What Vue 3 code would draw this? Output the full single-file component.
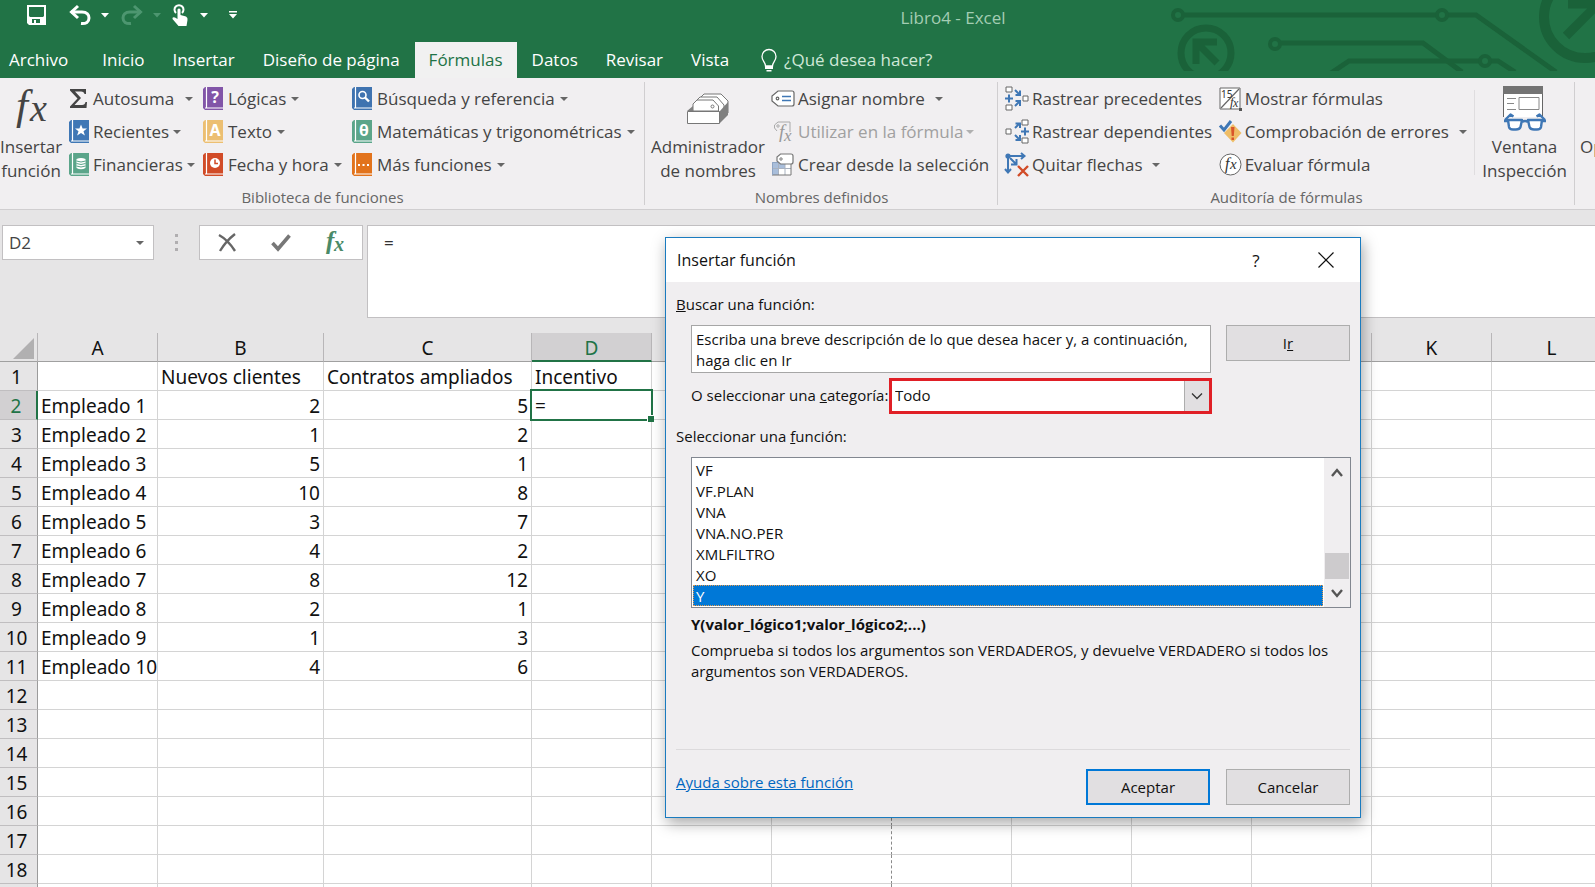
<script setup>
import { ref } from 'vue'

const tabs = ['Archivo', 'Inicio', 'Insertar', 'Diseño de página', 'Fórmulas', 'Datos', 'Revisar', 'Vista']

const library = [
  [
    { label: 'Autosuma', kind: 'sigma', wide: true },
    { label: 'Recientes', kind: 'star', color: '#3f77b5' },
    { label: 'Financieras', kind: 'coins', color: '#5ba58a' }
  ],
  [
    { label: 'Lógicas', kind: 'text', glyph: '?', color: '#8255a8' },
    { label: 'Texto', kind: 'text', glyph: 'A', color: '#ecbf72' },
    { label: 'Fecha y hora', kind: 'clock', color: '#d14b27' }
  ],
  [
    { label: 'Búsqueda y referencia', kind: 'lens', color: '#3f73b0' },
    { label: 'Matemáticas y trigonométricas', kind: 'text', glyph: 'θ', color: '#5ba58a' },
    { label: 'Más funciones', kind: 'dots', color: '#e2731c' }
  ]
]

const columns = 'ABCDEFGHIJKL'.split('')
const data = {
  1: ['', 'Nuevos clientes', 'Contratos ampliados', 'Incentivo'],
  2: ['Empleado 1', 2, 5, '='],
  3: ['Empleado 2', 1, 2],
  4: ['Empleado 3', 5, 1],
  5: ['Empleado 4', 10, 8],
  6: ['Empleado 5', 3, 7],
  7: ['Empleado 6', 4, 2],
  8: ['Empleado 7', 8, 12],
  9: ['Empleado 8', 2, 1],
  10: ['Empleado 9', 1, 3],
  11: ['Empleado 10', 4, 6]
}
const cell = (r, c) => data[r]?.[c] ?? ''

const cellName = ref('D2')
const formula = ref('=')
const query = ref('Escriba una breve descripción de lo que desea hacer y, a continuación, haga clic en Ir')
const category = ref('Todo')
const functions = ['VF', 'VF.PLAN', 'VNA', 'VNA.NO.PER', 'XMLFILTRO', 'XO', 'Y']
const selected = ref('Y')
</script>

<template>
  <div class="app">
    <header class="top">
      <svg class="circuit" viewBox="0 0 435 71" fill="none" stroke="#1a6239" stroke-width="5">
        <circle cx="18" cy="15" r="5" stroke-width="4" />
        <path d="M24 15H277M287 15H316L396 72" />
        <circle cx="282" cy="15" r="5" stroke-width="4" />
        <circle cx="46" cy="53" r="25" stroke-width="7" />
        <path d="M36 64V42H57M37 43L57 63" stroke-width="7" />
        <circle cx="115" cy="44" r="5" stroke-width="4" />
        <path d="M121 43H263L302 72" />
        <path d="M171 73L189 61H320M330 61H338L355 72" />
        <circle cx="325" cy="61" r="5" stroke-width="4" />
        <circle cx="425" cy="17" r="41" stroke-width="10" />
        <path d="M406 36L440 2M408 4H440" stroke-width="9" />
      </svg>
      <div class="titlebar">
        <div class="qat">
          <button class="q save" aria-label="Guardar">
            <svg width="19" height="20" viewBox="0 0 19 20"><path fill="#fff" fill-rule="evenodd" d="M0 0H19V20H2L0 18ZM2 2V11L3 12H16L17 11V2ZM5 14V18H7V15H9V18H13V14Z" /></svg>
          </button>
          <button class="q undo" aria-label="Deshacer">
            <svg width="22" height="20" viewBox="0 0 22 20" fill="none" stroke="#fff"><path stroke-width="3" d="M2 7H13C18 7 20 10 20 13C20 17 17 19 12 18.5" /><path stroke-width="3" d="M9 1L2.500 7L9 13" /></svg>
          </button>
          <button class="q" aria-label="Opciones de deshacer"><svg width="8" height="5" viewBox="0 0 8 5"><path fill="#fff" d="M0 0H8L4 4.500Z" /></svg></button>
          <button class="q redo" aria-label="Rehacer">
            <svg width="22" height="20" viewBox="0 0 22 20" fill="none" stroke="#4d9670"><path stroke-width="3" d="M20 7H9C4 7 2 10 2 13C2 17 5 19 10 18.500" /><path stroke-width="3" d="M13 1L19.500 7L13 13" /></svg>
          </button>
          <button class="q" aria-label="Opciones de rehacer"><svg width="8" height="5" viewBox="0 0 8 5"><path fill="#4d9670" d="M0 0H8L4 4.500Z" /></svg></button>
          <button class="q touch" aria-label="Modo mouse o táctil">
            <svg width="16" height="22" viewBox="0 0 16 22"><path fill="none" stroke="#fff" stroke-width="2" d="M4 9A4.500 4.500 0 1 1 10 9" /><path fill="#fff" d="M5.500 5.500Q7 3.500 8.500 5.500V11L14 12.500Q16 13.500 15.500 16L14.500 22H6.500L.5 15Q0 12.500 3 13.500L5.500 15Z" /></svg>
          </button>
          <button class="q" aria-label="Opciones de modo"><svg width="8" height="5" viewBox="0 0 8 5"><path fill="#fff" d="M0 0H8L4 4.500Z" /></svg></button>
          <button class="q custom" aria-label="Personalizar"><svg width="8" height="8" viewBox="0 0 8 8"><path fill="#fff" d="M0 0H8V1.500H0ZM0 3H8L4 7.500Z" /></svg></button>
        </div>
        <div class="title">Libro4 - Excel</div>
      </div>
      <nav class="tabs">
        <button v-for="t in tabs" :key="t" class="tab" :class="{ active: t === 'Fórmulas' }">{{ t }}</button>
        <button class="tell">
          <svg width="16" height="23" viewBox="0 0 16 23"><path fill="none" stroke="#fff" stroke-width="1.300" d="M4.500 17C4.500 13 1 12 1 7.500A7 7 0 0 1 15 7.500C15 12 11.500 13 11.500 17Z" /><path fill="#fff" d="M4 17H12V20H4ZM5.500 21H10.500V22.500H5.500Z" /></svg>
          ¿Qué desea hacer?
        </button>
      </nav>
    </header>

    <section class="ribbon">
      <div class="group g1">
        <div class="body">
          <button class="big">
            <span class="pic"><svg width="38" height="46" viewBox="0 0 38 46"><text x="4" y="33" class="fx" font-size="43" fill="#444">f</text><text x="18" y="35" class="fx" font-size="38" fill="#444">x</text></svg></span>
            Insertar<br />función
          </button>
          <div v-for="(col, i) in library" :key="i" class="col" :class="'lib' + i">
            <button v-for="b in col" :key="b.label" class="cmd">
              <svg v-if="b.kind === 'sigma'" class="ico" width="20" height="23" viewBox="0 0 20 23"><path fill="#444" d="M1 2H17V7H15.500Q15 4.500 12 4.500H6L12 11L5.500 18H13Q16 18 16.500 15H18L17.500 21H1V19.500L8.500 11.500L1 3.500Z" /></svg>
              <svg v-else class="ico" width="20" height="23" viewBox="0 0 20 23">
                <path :fill="b.color" d="M2 0H20V23H2L0 21V2Z" />
                <path fill="none" stroke="#fff" stroke-width="1.200" d="M3.500 0V21.500M2 21H20" />
                <text v-if="b.kind === 'text'" x="12" y="16" text-anchor="middle" class="bookglyph">{{ b.glyph }}</text>
                <path v-else-if="b.kind === 'star'" fill="#fff" d="M12 4.500L13.600 8.500H18L14.500 11.200L15.900 15.500L12 12.900L8.100 15.500L9.500 11.200L6 8.500H10.400Z" />
                <g v-else-if="b.kind === 'coins'"><path fill="#fff" d="M7.500 6Q12 4 16.500 6V15Q12 17.500 7.500 15Z" /><path fill="none" :stroke="b.color" stroke-width="1" d="M7.500 8Q12 10 16.500 8M7.500 10.500Q12 12.500 16.500 10.500M7.500 13Q12 15 16.500 13" /></g>
                <g v-else-if="b.kind === 'clock'"><circle cx="12" cy="10" r="5" fill="#fff" /><path fill="none" :stroke="b.color" stroke-width="1.500" d="M12 6.500V10.500H15" /></g>
                <g v-else-if="b.kind === 'lens'" fill="none" stroke="#fff"><circle cx="10.500" cy="8" r="3.500" stroke-width="1.600" /><path stroke-width="2.400" d="M13 10.500L17 14.500" /></g>
                <path v-else fill="#fff" d="M6 11h2v2H6zM10.500 11h2v2h-2zM15 11h2v2h-2z" />
              </svg>
              <span>{{ b.label }}</span>
              <i class="arrow" :class="{ wide: b.wide }"></i>
            </button>
          </div>
        </div>
        <div class="caption">Biblioteca de funciones</div>
      </div>

      <div class="group g2">
        <div class="body">
          <button class="big">
            <span class="pic"><svg width="42" height="31" viewBox="0 0 42 31" stroke="#777" fill="#fff"><path d="M14 4L17 1H34L41 8V20H30Z" /><path d="M10 7L13 4H30L37 12V19H28Z" /><path d="M6 18V11L10 7H26L31.500 13V18Z" /><path fill="#808080" stroke="none" d="M33 18L41 9V22L33 30ZM0 18L6 13V18Z" /><path d="M.5 18.500H32.500V30.500H.5Z" /><circle cx="25.500" cy="13.500" r="1.500" /></svg></span>
            Administrador<br />de nombres
          </button>
          <div class="col">
            <button class="cmd">
              <svg class="ico" width="24" height="17" viewBox="0 0 24 17" fill="#fff" stroke="#666" stroke-width="1.200"><path d="M7 1H21Q23 1 23 3V14Q23 16 21 16H7L1 11V6Z" /><circle cx="6.500" cy="8.500" r="1.300" /><path stroke="#3f77b5" stroke-width="1.600" d="M11 6.500H20M11 10.500H20" /></svg>
              <span>Asignar nombre</span><i class="arrow wide"></i>
            </button>
            <button class="cmd" disabled>
              <svg class="ico" width="24" height="22" viewBox="0 0 24 22"><path fill="none" stroke="#aaa" d="M6 10L3.500 7V4L7 1H19V11" /><circle cx="7" cy="5" r="1.200" fill="none" stroke="#aaa" /><text x="8" y="17" class="fx" font-size="19" fill="#999">f</text><text x="13" y="20" class="fx" font-size="17" fill="#999">x</text></svg>
              <span>Utilizar en la fórmula</span><i class="arrow"></i>
            </button>
            <button class="cmd">
              <svg class="ico" width="24" height="23" viewBox="0 0 24 23" stroke="#777" fill="#fff"><path stroke="none" d="M2 9H20V22H2Z" /><path fill="#a9bedb" stroke="none" d="M1 9H14V15.500H7.500V22H1Z" /><path fill="none" stroke="#a9b2c0" d="M1 15.500H20M7.500 9V22M14 9V22" /><path fill="none" d="M20 11V22H1" /><path fill="none" stroke="#8fa5c4" d="M1.500 22V9.500H8" /><path stroke-width="1.200" d="M9.500 1H20Q22 1 22 3V9Q22 11 20 11H9.500L6 8V4Z" /><circle cx="10" cy="6" r="1.200" /></svg>
              <span>Crear desde la selección</span>
            </button>
          </div>
        </div>
        <div class="caption">Nombres definidos</div>
      </div>

      <div class="group g3">
        <div class="body">
          <div class="col aud1">
            <button class="cmd">
              <svg class="ico" width="24" height="25" viewBox="0 0 24 25" fill="#fff" stroke="#666"><path d="M1 1H7V6H1ZM1 19H7V24H1ZM18 10H23V15H18Z" /><path fill="none" stroke="#3f77b5" stroke-width="2" d="M4 8.500V16.500M0 12.500H8M10 4L14 8M10 20L14 16M15 4.500V9H10.500M15 20V15H10.500" /></svg>
              <span>Rastrear precedentes</span>
            </button>
            <button class="cmd">
              <svg class="ico" width="24" height="25" viewBox="0 0 24 25" fill="#fff" stroke="#666"><path d="M17 1H23V6H17ZM17 19H23V24H17ZM1 10H6V15H1Z" /><path fill="none" stroke="#3f77b5" stroke-width="2" d="M20 8.500V16.500M16 12.500H24M10 9L14 5M10 16L14 20M10.500 4.500H15V9M10.500 21H15V16" /></svg>
              <span>Rastrear dependientes</span>
            </button>
            <button class="cmd">
              <svg class="ico" width="24" height="25" viewBox="0 0 24 25" fill="none" stroke="#3f77b5" stroke-width="2"><circle cx="3" cy="4" r="2.600" fill="#3f77b5" stroke="none" /><path d="M3 4H19M16 1L19.500 4L16 7M3 4V20M0 17L3 20.500L6 17M5 6L11 12M11.500 7V12.500H6" /><path stroke="#d14b27" stroke-width="2.400" d="M13 14L23 24M23 14L13 24" /></svg>
              <span>Quitar flechas</span><i class="arrow wide"></i>
            </button>
          </div>
          <div class="col aud2">
            <button class="cmd">
              <svg class="ico" width="23" height="24" viewBox="0 0 23 24"><path fill="#fff" stroke="#666" d="M1 1H21V22H1Z" /><path stroke="#666" stroke-width="1.200" d="M2 21L20 2" /><text x="2" y="11" class="small15">15</text><text x="11" y="19" class="fx" font-size="13" fill="#333">f</text><text x="14" y="20" class="fx" font-size="12" fill="#333">x</text><path fill="#555" d="M20 21H23V24H20Z" /></svg>
              <span>Mostrar fórmulas</span>
            </button>
            <button class="cmd">
              <svg class="ico" width="23" height="23" viewBox="0 0 23 23"><path fill="#efbd67" d="M14 4L22.500 13L14 22.500L5 13Z" /><path fill="none" stroke="#3f77b5" stroke-width="3" d="M1 5.500L5 10L12 1" /><path fill="#d9542b" d="M12 7H15.500L14.800 16H12.700ZM12.500 17.500H15V20H12.500Z" /></svg>
              <span>Comprobación de errores</span><i class="arrow wide"></i>
            </button>
            <button class="cmd">
              <svg class="ico" width="23" height="23" viewBox="0 0 23 23"><circle cx="11.500" cy="11.500" r="10.500" fill="#fff" stroke="#666" /><text x="6" y="16" class="fx" font-size="16" fill="#333">f</text><text x="11" y="16" class="fx" font-size="15" fill="#333">x</text></svg>
              <span>Evaluar fórmula</span>
            </button>
          </div>
          <button class="big watch">
            <span class="pic"><svg width="44" height="46" viewBox="0 0 44 46"><path fill="#fff" stroke="#666" d="M.5 31V1H39.500V31" /><path fill="#737373" d="M0 0H40V8H0Z" /><path fill="none" stroke="#888" d="M4 12.500H13M4 17.500H11M4 23.500H13M16 11.500H36V23.500H16Z" /><g fill="#fff" stroke="#3f77b5" stroke-width="2.400" stroke-linejoin="round"><path d="M5 34H19L17.500 41Q16.500 43.500 13 43.500H10Q6.500 43.500 6 41ZM25 34H39L38 41Q37.500 43.500 34 43.500H31Q27.500 43.500 26.500 41Z" /><path fill="none" d="M19 36Q22 34 25 36M1 35H6M38 35H43M2 34L7.500 28.500L10.500 30.500M42 34L36.500 28.500L33.500 30.500" /></g></svg></span>
            Ventana<br />Inspección
          </button>
        </div>
        <div class="caption">Auditoría de fórmulas</div>
      </div>

      <div class="group g4">
        <div class="body"><button class="big last"><span class="pic"></span>Opciones</button></div>
      </div>
    </section>

    <section class="formulabar">
      <div class="namebox">
        <input v-model="cellName" aria-label="Cuadro de nombres" />
        <i class="arrow"></i>
      </div>
      <div class="grip"><i></i><i></i><i></i></div>
      <div class="fbtns">
        <button aria-label="Cancelar entrada"><svg width="19" height="19" viewBox="0 0 19 19" fill="none" stroke="#666" stroke-width="2.400"><path d="M1 2Q10 7 17 18M17 1Q8 8 2 18" /></svg></button>
        <button aria-label="Introducir"><svg width="20" height="18" viewBox="0 0 20 18" fill="none" stroke="#777" stroke-width="3.600"><path d="M1.500 9L7 15L18.500 1.500" /></svg></button>
        <button aria-label="Insertar función"><svg width="22" height="26" viewBox="0 0 22 26"><text x="2" y="19" class="fx bold" font-size="25" fill="#4a8a68">f</text><text x="10" y="21" class="fx bold" font-size="20" fill="#4a8a68">x</text></svg></button>
      </div>
      <textarea v-model="formula" class="formula" aria-label="Barra de fórmulas"></textarea>
    </section>

    <main class="sheet">
      <table>
        <colgroup>
          <col class="w-head" /><col class="w-a" /><col class="w-b" /><col class="w-c" />
          <col v-for="n in 9" :key="n" class="w-n" />
        </colgroup>
        <thead>
          <tr>
            <th class="corner"><svg width="21" height="21" viewBox="0 0 21 21"><path fill="#b1b0b1" d="M21 0V21H0Z" /></svg></th>
            <th v-for="c in columns" :key="c" scope="col" :class="{ on: c === 'D' }">{{ c }}</th>
          </tr>
        </thead>
        <tbody>
          <tr v-for="r in 19" :key="r">
            <th scope="row" :class="{ on: r === 2 }">{{ r < 19 ? r : '' }}</th>
            <td v-for="(c, i) in columns" :key="c" :class="{ num: typeof cell(r, i) === 'number', current: r === 2 && c === 'D', brk: c === 'F' }">{{ cell(r, i) }}</td>
          </tr>
        </tbody>
      </table>
    </main>

    <div class="dialog" role="dialog" aria-labelledby="dlg-title">
      <div class="dhead">
        <h1 id="dlg-title">Insertar función</h1>
        <button class="help" aria-label="Ayuda">?</button>
        <button class="close" aria-label="Cerrar"><svg width="16" height="16" viewBox="0 0 16 16" fill="none" stroke="#111" stroke-width="1.200"><path d="M.5 .5L15.500 15.500M15.500 .5L.5 15.500" /></svg></button>
      </div>
      <div class="dbody">
        <label class="lbl" for="query"><u>B</u>uscar una función:</label>
        <div class="search">
          <textarea id="query" v-model="query"></textarea>
          <button class="btn">I<u>r</u></button>
        </div>
        <div class="cat">
          <label for="category">O seleccionar una <u>c</u>ategoría:</label>
          <div class="combo">
            <select id="category" v-model="category"><option>Todo</option></select>
            <span class="drop"><svg width="12" height="7" viewBox="0 0 12 7" fill="none" stroke="#333" stroke-width="1.300"><path d="M1 .5L6 5.500L11 .5" /></svg></span>
          </div>
        </div>
        <div id="fnlabel" class="lbl second">Seleccionar una <u>f</u>unción:</div>
        <div class="listbox">
          <ul role="listbox" aria-labelledby="fnlabel">
            <li v-for="f in functions" :key="f" role="option" :aria-selected="f === selected" :class="{ sel: f === selected }" @click="selected = f">{{ f }}</li>
          </ul>
          <div class="scroll">
            <button aria-label="Subir"><svg width="12" height="9" viewBox="0 0 12 9" fill="none" stroke="#555" stroke-width="2.400"><path d="M1 8L6 2L11 8" /></svg></button>
            <div class="thumb"></div>
            <button aria-label="Bajar"><svg width="12" height="9" viewBox="0 0 12 9" fill="none" stroke="#555" stroke-width="2.400"><path d="M1 1L6 7L11 1" /></svg></button>
          </div>
        </div>
        <div class="desc">
          <strong>Y(valor_lógico1;valor_lógico2;...)</strong>
          <p>Comprueba si todos los argumentos son VERDADEROS, y devuelve VERDADERO si todos los argumentos son VERDADEROS.</p>
        </div>
        <div class="foot">
          <a href="#">Ayuda sobre esta función</a>
          <button class="btn primary">Aceptar</button>
          <button class="btn">Cancelar</button>
        </div>
      </div>
    </div>
  </div>
</template>

<style>
html, body { margin: 0; overflow: hidden; }
</style>

<style scoped>
* { box-sizing: border-box; }
.app {
  position: relative;
  display: flex;
  flex-direction: column;
  height: 100vh;
  overflow: hidden;
  background: #e6e5e6;
  color: #444;
  font: 17px/24px "Open Sans", "Noto Sans", sans-serif;
}
button, input, textarea, select { font: inherit; color: inherit; }
button { border: 0; background: none; padding: 0; margin: 0; }
svg { display: block; flex: none; overflow: visible; }
.fx { font-family: "Liberation Serif", serif; font-style: italic; }
.bold { font-weight: 700; }

.top { position: relative; flex: none; background: #217346; color: #fff; overflow: hidden; }
.circuit { position: absolute; right: 0; top: 0; width: 435px; height: 71px; overflow: hidden; }
.titlebar { position: relative; display: flex; height: 42px; }
.qat { display: flex; align-items: center; height: 30px; padding-left: 27px; }
.q { display: flex; }
.undo { margin: 0 10px 0 23px; }
.redo { margin: 0 10px 0 12px; }
.touch { margin: 0 12px 0 11px; }
.custom { margin-left: 21px; }
.title { flex: 1; padding-left: 74px; text-align: center; line-height: 36px; color: #a3cdb3; }
.tabs { position: relative; display: flex; height: 36px; }
.tab { padding: 0 14px; line-height: 36px; }
.tab:first-child { padding: 0 20px 0 9px; }
.tab.active { margin: 0 1px; background: #f1f1f1; color: #217346; }
.tell { display: flex; align-items: center; gap: 7px; margin-left: 18px; color: #cfe8d8; }

.ribbon { display: flex; flex: none; background: #f1eff1; border-bottom: 1px solid #d0ced0; height: 132px; overflow: hidden; }
.group { position: relative; flex: none; padding-top: 4px; }
.group::after { content: ""; position: absolute; right: 0; top: 4px; bottom: 4px; width: 1px; background: #d0ced0; }
.g1 { width: 645px; }
.g2 { width: 353px; }
.g3 { width: 577px; }
.g4::after { display: none; }
.body { display: flex; }
.caption { margin-top: 3px; line-height: 22px; font-size: 15px; color: #666; text-align: center; }
.big { width: 62px; text-align: center; white-space: nowrap; }
.pic { display: flex; align-items: center; justify-content: center; height: 53px; }
.g2 .big { width: 126px; }
.big.watch { position: relative; width: 101px; }
.big.watch::before { content: ""; position: absolute; left: 0; top: 8px; bottom: 8px; width: 1px; background: #dfdddf; }
.big.last { width: 84px; padding: 0 0 24px 5px; text-align: left; }
.col { display: flex; flex-direction: column; }
.lib0 { width: 135px; padding-left: 7px; }
.lib1 { width: 149px; padding-left: 6px; }
.lib2 { padding-left: 6px; }
.cmd { display: flex; align-items: center; height: 33px; gap: 5px; white-space: nowrap; }
.lib0 .cmd { gap: 4px; }
.g2 .cmd, .g3 .cmd { gap: 3px; }
.aud1 { width: 215px; padding-left: 7px; }
.aud2 { width: 262px; padding-left: 6px; }
.cmd[disabled] { color: #a0a0a0; }
.arrow { width: 0; border: 4px solid transparent; border-top: 4px solid #666; border-bottom: 0; }
.arrow.wide { margin-left: 7px; }
.cmd[disabled] .arrow { border-top-color: #b0b0b0; }
.bookglyph { font: 700 16px "Noto Sans", sans-serif; fill: #fff; }
.small15 { font: 10px "Noto Sans", sans-serif; fill: #333; }

.formulabar { display: flex; flex: none; padding: 15px 0 0 2px; height: 123px; color: #333; }
.namebox { display: flex; align-items: center; width: 152px; height: 35px; background: #fff; border: 1px solid #c2c0c2; padding-right: 9px; }
.namebox input { flex: 1; min-width: 0; border: 0; padding: 0 0 0 6px; background: none; color: #444; }
.grip { display: flex; flex-direction: column; gap: 4px; width: 45px; height: 35px; align-items: center; justify-content: center; }
.grip i { width: 3px; height: 3px; background: #b0aeb0; }
.fbtns { display: flex; width: 164px; height: 35px; background: #fff; border: 1px solid #c2c0c2; }
.fbtns button { flex: 1; display: flex; align-items: center; justify-content: center; }
.formula { flex: 1; margin-left: 4px; height: 93px; background: #fff; border: 1px solid #c2c0c2; border-right: 0; padding: 5px 16px; resize: none; outline: 0; display: block; }

.sheet { flex: 1; min-height: 0; overflow: hidden; color: #111; font: 19px/26px "Noto Sans", "Open Sans", sans-serif; }
table { width: 1612px; table-layout: fixed; border-collapse: separate; border-spacing: 0; background: #fff; }
.w-head { width: 38px; }
.w-a { width: 120px; }
.w-b { width: 166px; }
.w-c { width: 208px; }
.w-n { width: 120px; }
th { height: 29px; padding: 2px 0 0; font-weight: 400; background: #e6e5e6; text-align: center; border-right: 1px solid #b8b6b8; border-bottom: 1px solid #a0a0a0; }
thead th { padding-top: 3px; line-height: 25px; }
thead th.on { background: #d2d0d2; color: #217346; border-bottom: 2px solid #217346; line-height: 24px; }
tbody th { border-bottom-color: #c0bec0; border-right-color: #9b9b9b; padding-right: 4px; }
tbody th.on { background: #d2d0d2; color: #217346; border-right: 2px solid #217346; }
thead th.corner { padding: 0; }
.corner svg { margin: 3px 3px 0 auto; }
td { height: 29px; padding: 2px 3px 0; border-right: 1px solid #d4d4d4; border-bottom: 1px solid #d4d4d4; white-space: nowrap; overflow: hidden; }
td.num { text-align: right; }
td.brk { border-right: 1px dashed #8a8a8a; }
td.current { position: relative; overflow: visible; }
td.current::before { content: ""; position: absolute; inset: -2px; border: 2px solid #217346; }
td.current::after { content: ""; position: absolute; right: -3px; bottom: -3px; width: 6px; height: 6px; background: #217346; border-top: 1px solid #fff; border-left: 1px solid #fff; }

.dialog { position: absolute; left: 665px; top: 237px; width: 696px; background: #f0eef0; border: 1px solid #1a7bbf; box-shadow: 2px 5px 14px rgba(0, 0, 0, 0.35); color: #111; font-size: 15px; line-height: 21px; }
.dhead { display: flex; align-items: center; height: 44px; background: #fff; padding-left: 11px; }
h1 { flex: 1; margin: 0; font-size: 16px; font-weight: 400; }
.help { width: 20px; font-size: 17px; }
.close { display: flex; justify-content: center; width: 40px; margin: 0 14px 0 40px; }
.dbody { padding: 12px 10px 12px; }
.lbl { display: block; }
.search { display: flex; align-items: flex-start; gap: 15px; margin: 10px 0 5px 15px; }
.search textarea { flex: 1; display: block; height: 48px; padding: 3px 4px; border: 1px solid #a6a6a6; background: #fff; resize: none; outline: 0; overflow: hidden; }
.btn { width: 124px; height: 36px; background: #e1dfe1; border: 1px solid #adadad; }
.btn.primary { border: 2px solid #0078d7; }
.cat { display: flex; align-items: center; justify-content: space-between; margin: 0 138px 0 15px; white-space: nowrap; }
.cat label { padding-bottom: 2px; }
.combo { display: flex; width: 323px; height: 36px; border: 3px solid #e01f26; background: #fff; position: relative; }
.combo select { appearance: none; flex: 1; border: 0; background: none; padding: 0 3px 2px; outline: 0; }
.drop { position: absolute; right: 0; top: 0; bottom: 0; width: 25px; display: flex; align-items: center; justify-content: center; background: #e1dfe1; border-left: 1px solid #adadad; pointer-events: none; }
.second { margin-top: 12px; }
.listbox { display: flex; margin: 10px -1px 0 15px; border: 1px solid #828790; background: #fff; height: 151px; }
ul { flex: 1; list-style: none; margin: 0; padding: 1px; }
li { padding: 2px 0 0 3px; line-height: 19px; }
li.sel { background: #0078d7; color: #fff; outline: 1px dotted #e89a4a; outline-offset: -1px; }
.scroll { display: flex; flex-direction: column; align-items: center; width: 26px; background: #f0eef0; }
.scroll button { height: 28px; display: flex; align-items: center; }
.thumb { width: 24px; height: 26px; margin-top: auto; background: #cdcbcd; }
.desc { margin: 6px -4px 0 15px; height: 135px; }
.desc strong { display: block; }
.desc p { margin: 5px 0 0; }
.foot { display: flex; align-items: flex-start; gap: 16px; padding-top: 19px; border-top: 1px solid #dcdadc; }
.foot a { flex: 1; color: #0067c0; margin-top: 3px; }
</style>
